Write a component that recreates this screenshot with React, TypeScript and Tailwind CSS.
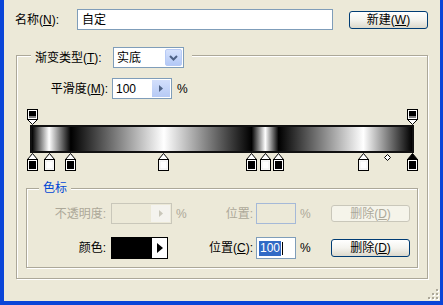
import React from "react"

const colorStops = [
  { p: 0, c: "#000" },
  { p: 0.0448, c: "#fff" },
  { p: 0.102, c: "#000" },
  { p: 0.347, c: "#fff" },
  { p: 0.578, c: "#000" },
  { p: 0.614, c: "#fff" },
  { p: 0.649, c: "#000" },
  { p: 0.872, c: "#fff" },
  { p: 1, c: "#000", selected: true },
]

const opacityStops = [0, 1]

function BottomStop({ c, selected }: { c: string; selected?: boolean }) {
  return (
    <svg width="11" height="18" viewBox="0 0 11 18">
      <path d="M5.5 0.5 L10.5 6.5 L0.5 6.5 Z" fill={selected ? "#000" : "#fff"} stroke="#000" />
      <rect x="0.5" y="6.5" width="10" height="11" fill="#fff" stroke="#000" />
      <rect x="2" y="8" width="7" height="8" fill={c} stroke={c === "#fff" ? "#ddd" : "none"} strokeWidth="0.5" />
    </svg>
  )
}

function TopStop() {
  return (
    <svg width="11" height="16" viewBox="0 0 11 16">
      <rect x="0.5" y="0.5" width="10" height="10" fill="#fff" stroke="#000" />
      <rect x="2" y="2" width="7" height="5" fill="#000" />
      <rect x="2" y="7" width="7" height="2" fill="#808080" />
      <path d="M0.5 10.5 L10.5 10.5 L5.5 15.5 Z" fill="#fff" stroke="#000" />
    </svg>
  )
}

function SpinArrow({ color }: { color: string }) {
  return (
    <svg width="4" height="7" viewBox="0 0 4 7">
      <path d="M0 0 L4 3.5 L0 7 Z" fill={color} />
    </svg>
  )
}

function XpButton({ children, disabled }: { children: React.ReactNode; disabled?: boolean }) {
  return (
    <div
      className={
        disabled
          ? "flex h-full w-full items-center justify-center rounded-[3px] border border-[#C9C7BA] bg-[#F5F4EA] text-[#ACA899]"
          : "flex h-full w-full items-center justify-center rounded-[3px] border border-[#003C74] bg-gradient-to-b from-white via-[#F4F3EE] to-[#DCD9CC] text-black"
      }
    >
      {children}
    </div>
  )
}

export default function App() {
  return (
    <div className="relative h-[305px] w-[443px] overflow-hidden border-b-4 border-l-4 border-r-[3px] border-[#0A45D8] bg-[#ECE9D8] font-['Liberation_Sans','Noto_Sans_CJK_SC',sans-serif] text-[12px] leading-none text-black">
      {/* Name row */}
      <div className="mt-[9px] flex h-[21px] items-center">
        <div className="ml-[11px] w-[62px]">
          名称(<u>N</u>):
        </div>
        <div className="flex h-[21px] w-[256px] items-center border border-[#7F9DB9] bg-white pl-[4px]">自定</div>
        <div className="ml-[16px] h-[18px] w-[79px]">
          <XpButton>
            新建(<u>W</u>)
          </XpButton>
        </div>
      </div>

      {/* Gradient group */}
      <div className="relative ml-[12px] mt-[25px] h-[224px] w-[412px] border border-[#ACA899] shadow-[inset_1px_1px_0_#fff,1px_1px_0_#fff]">
        <div className="absolute left-[14px] top-[-9px] flex h-[21px] items-center bg-[#ECE9D8] pl-[4px] pr-[8px]">
          <div className="w-[78px]">
            渐变类型(<u>T</u>):
          </div>
          <div className="flex h-[21px] w-[71px] items-center border border-[#7F9DB9] bg-white">
            <div className="flex-1 pl-[3px]">实底</div>
            <div className="mr-px flex h-[17px] w-[17px] items-center justify-center rounded-[2px] border border-[#B7CAF5] bg-gradient-to-b from-[#D6E2FC] to-[#B3C8F6]">
              <svg width="9" height="6" viewBox="0 0 9 6">
                <path d="M1 1 L4.5 4.5 L8 1" fill="none" stroke="#4D6185" strokeWidth="2" />
              </svg>
            </div>
          </div>
        </div>

        {/* Smoothness */}
        <div className="mt-[22px] flex h-[21px] items-center">
          <div className="w-[95px] pr-[4px] text-right">
            平滑度(<u>M</u>):
          </div>
          <div className="flex h-[21px] w-[60px] items-center border border-[#7F9DB9] bg-white">
            <div className="flex-1 pl-[3px]">100</div>
            <div className="mr-px flex h-[17px] w-[18px] items-center justify-center bg-gradient-to-b from-[#D3DFFB] to-[#B6CAF5]">
              <SpinArrow color="#4D6185" />
            </div>
          </div>
          <div className="pl-[5px]">%</div>
        </div>

        {/* Gradient editor */}
        <div className="ml-[13px] mt-[10px] flex w-[384px] flex-col">
          <div className="relative h-[16px]">
            {opacityStops.map((p) => (
              <div key={p} className="absolute top-0" style={{ left: p * 380 - 3.5 }}>
                <TopStop />
              </div>
            ))}
          </div>
          <div className="h-[28px] border-2 border-[#111] bg-[linear-gradient(to_right,#000_0%,#fff_4.5%,#000_10.2%,#fff_34.7%,#000_57.8%,#fff_61.4%,#000_64.9%,#fff_87.2%,#000_100%)]" />
          <div className="relative h-[18px]">
            {colorStops.map((s) => (
              <div key={s.p} className="absolute top-0" style={{ left: s.p * 380 - 3.5 }}>
                <BottomStop c={s.c} selected={s.selected} />
              </div>
            ))}
            <div className="absolute top-[1px]" style={{ left: 0.936 * 380 - 1.5 }}>
              <svg width="7" height="7" viewBox="0 0 7 7">
                <path d="M3.5 0.5 L6.5 3.5 L3.5 6.5 L0.5 3.5 Z" fill="#fff" stroke="#000" />
              </svg>
            </div>
          </div>
        </div>

        {/* Color stop group */}
        <div className="relative ml-[9px] mt-[17px] h-[80px] w-[392px] border border-[#ACA899] shadow-[inset_1px_1px_0_#fff,1px_1px_0_#fff]">
          <div className="absolute left-[12px] top-[-9px] bg-[#ECE9D8] px-[4px] leading-[17px] text-[#0046D5]">色标</div>

          <div className="mt-[14px] flex h-[21px] items-center text-[#ACA899]">
            <div className="w-[84px] pr-[5px] text-right">不透明度:</div>
            <div className="flex h-[21px] w-[61px] items-center border border-[#C9C7BA] bg-[#ECE9D8]">
              <div className="flex-1" />
              <div className="mr-px flex h-[17px] w-[19px] items-center justify-center bg-[#F4F3EE]">
                <SpinArrow color="#C9C7BA" />
              </div>
            </div>
            <div className="w-[22px] pl-[4px]">%</div>
            <div className="w-[62px] pr-[3px] text-right">位置:</div>
            <div className="h-[21px] w-[40px] border border-[#A5B9D8] bg-[#ECE9D8]" />
            <div className="w-[35px] pl-[4px]">%</div>
            <div className="h-[17px] w-[79px]">
              <XpButton disabled>
                删除(<u>D</u>)
              </XpButton>
            </div>
          </div>

          <div className="mt-[13px] flex h-[22px] items-center">
            <div className="w-[84px] pr-[5px] text-right">颜色:</div>
            <div className="flex h-[22px] w-[57px] border border-black">
              <div className="flex-1 bg-black" />
              <div className="flex w-[16px] items-center justify-center border-l border-black bg-white">
                <svg width="6" height="10" viewBox="0 0 6 10">
                  <path d="M0 0 L6 5 L0 10 Z" fill="#000" />
                </svg>
              </div>
            </div>
            <div className="w-[26px]" />
            <div className="w-[62px] pr-[3px] text-right">
              位置(<u>C</u>):
            </div>
            <div className="flex h-[22px] w-[40px] items-center border border-[#7F9DB9] bg-white pl-[2px]">
              <span className="bg-[#316AC5] px-px leading-[15px] text-white">100</span>
              <span className="ml-px h-[13px] w-px bg-black" />
            </div>
            <div className="w-[35px] pl-[4px]">%</div>
            <div className="h-[18px] w-[79px]">
              <XpButton>
                删除(<u>D</u>)
              </XpButton>
            </div>
          </div>
        </div>
      </div>

      {/* Resize grip */}
      <div className="absolute bottom-[1px] right-[1px]">
        <svg width="11" height="11" viewBox="0 0 11 11">
          {[
            [8, 0],
            [4, 4],
            [8, 4],
            [0, 8],
            [4, 8],
            [8, 8],
          ].map(([x, y]) => (
            <g key={`${x}-${y}`}>
              <rect x={x + 1} y={y + 1} width="2" height="2" fill="#fff" />
              <rect x={x} y={y} width="2" height="2" fill="#ACA899" />
            </g>
          ))}
        </svg>
      </div>
    </div>
  )
}
